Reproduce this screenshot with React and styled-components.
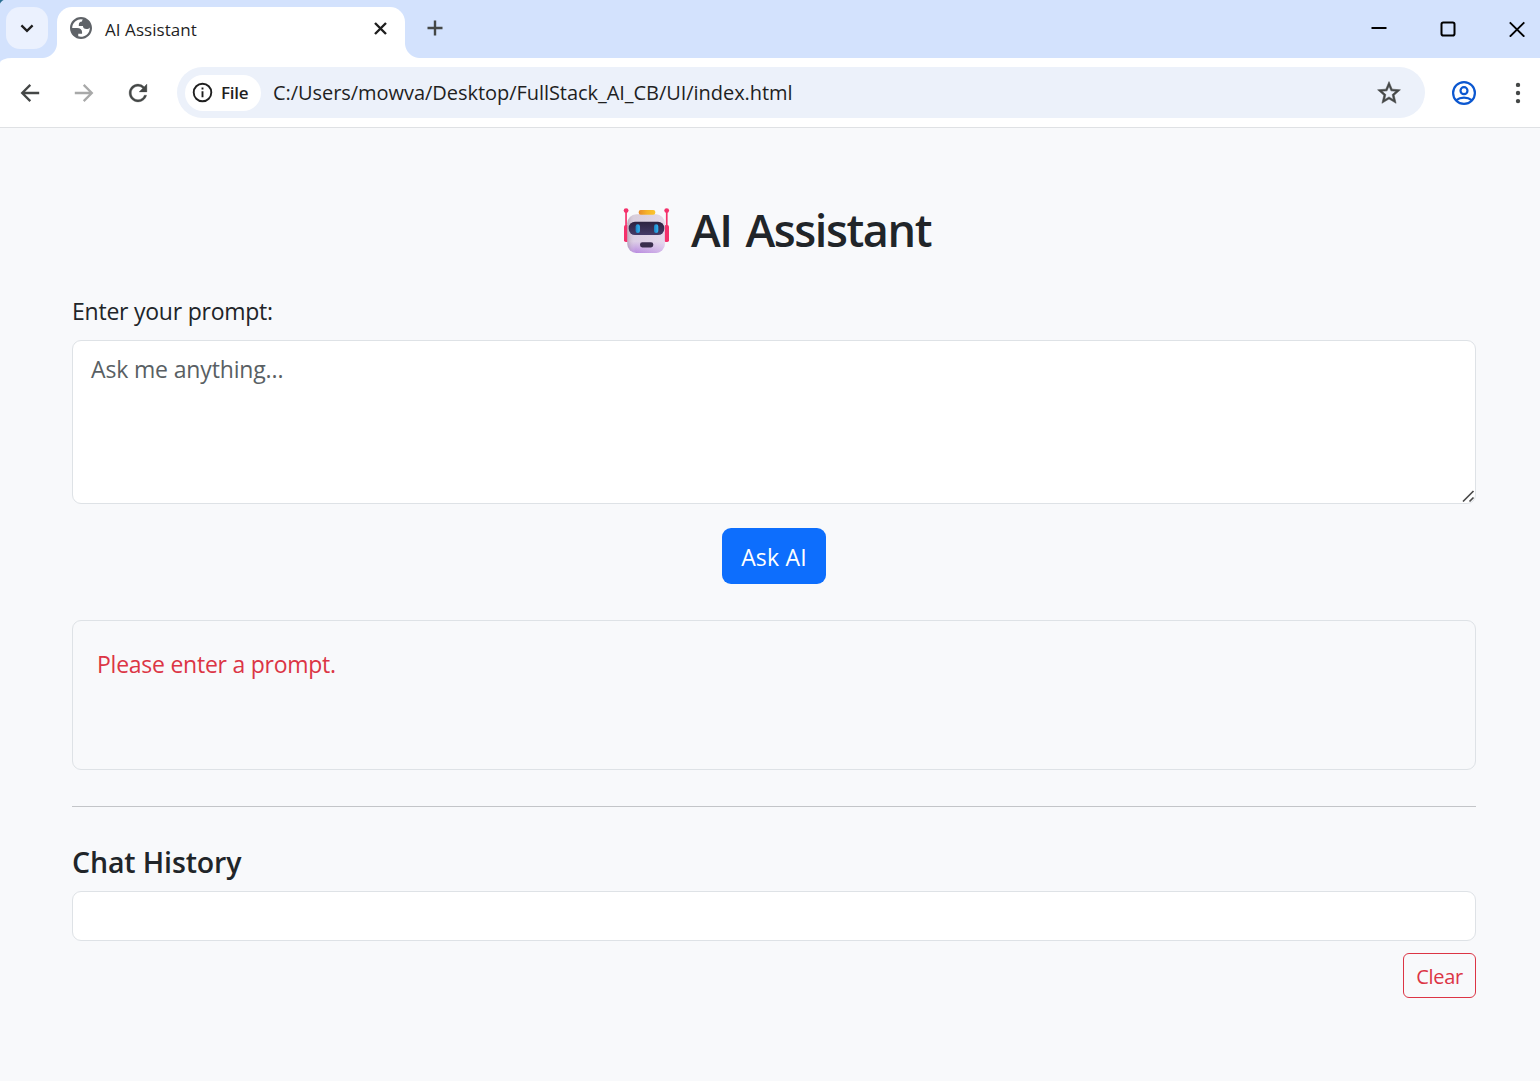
import React from "react";
import styled, { createGlobalStyle } from "styled-components";

const sans = `"Open Sans", "Noto Sans", sans-serif`;

const GlobalStyle = createGlobalStyle`
  *, *::before, *::after { box-sizing: border-box; }
  html, body { margin: 0; height: 100%; }
  body {
    overflow: hidden;
    background: #f8f9fb;
    color: #212529;
    font-family: ${sans};
  }
`;

const Window = styled.div`
  display: flex;
  flex-direction: column;
  width: 1540px;
  height: 1081px;
  overflow: hidden;
  background: #f8f9fb;
`;

const TabStrip = styled.header`
  display: flex;
  align-items: flex-start;
  flex: none;
  height: 58px;
  padding: 7px 15.5px 0 6px;
  background:
    radial-gradient(circle at 9px 9px, transparent 10px, #2b6f93 11px) 0 0 / 5px 5px no-repeat,
    #d3e2fd;
`;

const TabSearch = styled.button`
  display: flex;
  align-items: center;
  justify-content: center;
  width: 42px;
  height: 42px;
  padding: 0;
  border: 0;
  border-radius: 14px;
  background: #ebf1fe;
`;

const Tab = styled.div`
  position: relative;
  display: flex;
  align-items: center;
  width: 348px;
  height: 51px;
  margin-left: 9px;
  padding: 0 18px 9px 13px;
  border-radius: 15px 15px 0 0;
  background: #fff;

  &::before,
  &::after {
    content: "";
    position: absolute;
    bottom: 0;
    width: 15px;
    height: 15px;
  }
  &::before {
    right: 100%;
    background: radial-gradient(circle at 0 0, transparent 14.5px, #fff 15.5px);
  }
  &::after {
    left: 100%;
    background: radial-gradient(circle at 100% 0, transparent 14.5px, #fff 15.5px);
  }
`;

const TabTitle = styled.span`
  flex: 1;
  margin: 3px 0 0 13px;
  color: #1f1f1f;
  font-size: 17px;
  line-height: 24px;
  letter-spacing: 0.06px;
`;

const NewTab = styled.div`
  display: flex;
  margin: 13px 0 0 22px;
`;

const WindowControls = styled.div`
  display: flex;
  gap: 53px;
  margin: 14px 0 0 auto;
`;

const Toolbar = styled.div`
  flex: none;
  background: #d3e2fd;
`;

const ToolbarInner = styled.div`
  display: flex;
  align-items: center;
  height: 70px;
  padding: 0 9px 0 20px;
  border-bottom: 1px solid #dfe1e4;
  border-top-left-radius: 12px 5px;
  background: #fff;
`;

const NavButtons = styled.nav`
  display: flex;
  gap: 34px;
  width: 157px;
`;

const AddressBar = styled.div`
  display: flex;
  align-items: center;
  width: 1248px;
  height: 51px;
  padding: 0 24px 0 8px;
  border-radius: 26px;
  background: #ecf1fa;
`;

const FileChip = styled.div`
  display: flex;
  align-items: center;
  gap: 8px;
  width: 76px;
  height: 36px;
  padding-left: 7px;
  border-radius: 18px;
  background: #fff;
  color: #1f1f1f;
  font-size: 17px;
  font-weight: 600;
  letter-spacing: -0.25px;
`;

const Url = styled.span`
  flex: 1;
  margin-left: 12px;
  color: #1f1f1f;
  font-size: 20px;
  line-height: 30px;
  letter-spacing: -0.05px;
`;

const ToolbarActions = styled.div`
  display: flex;
  align-items: center;
  justify-content: space-between;
  flex: 1;
  padding-left: 27px;
`;

const Page = styled.main`
  display: flex;
  flex-direction: column;
  flex: 1;
  padding: 73px 64px 0 72px;
`;

const Title = styled.h1`
  display: flex;
  align-items: center;
  gap: 21px;
  align-self: center;
  height: 58px;
  margin: 0 0 34px;
  padding-left: 6px;
  font-size: 45px;
  font-weight: 600;
  line-height: 58px;
  letter-spacing: -1.4px;
  word-spacing: 3.5px;

  svg { margin-top: 1px; }
`;

const Label = styled.label`
  margin-bottom: 11px;
  font-size: 23px;
  line-height: 36px;
  letter-spacing: -0.235px;
`;

const PromptField = styled.div`
  position: relative;
  height: 164px;
  margin-bottom: 24px;
`;

const Prompt = styled.textarea`
  display: block;
  width: 100%;
  height: 100%;
  padding: 10px 18px;
  border: 1px solid #dee2e6;
  border-radius: 9px;
  outline: 0;
  resize: none;
  background: #fff;
  font: 23px/36px ${sans};
  letter-spacing: -0.15px;

  &::placeholder {
    color: #595f64;
    opacity: 1;
  }
`;

const Grip = styled.svg`
  position: absolute;
  right: 1.5px;
  bottom: 1px;
`;

const AskButton = styled.button`
  align-self: center;
  width: 104px;
  height: 56px;
  margin-bottom: 36px;
  padding: 2px 0 0;
  border: 0;
  border-radius: 9px;
  background: #0d6efd;
  color: #fff;
  font: 23px/36px ${sans};
  letter-spacing: 0.2px;
`;

const Response = styled.section`
  height: 150px;
  padding: 25px 24px;
  border: 1px solid #dee2e6;
  border-radius: 9px;
  color: #dc3545;
  font-size: 23px;
  line-height: 36px;
  letter-spacing: -0.25px;
`;

const Divider = styled.hr`
  width: 100%;
  height: 1px;
  margin: 36px 0 37px;
  border: 0;
  background: #c3c5c8;
`;

const HistoryTitle = styled.h2`
  margin: 0 0 11px;
  font-size: 28.5px;
  font-weight: 600;
  line-height: 36px;
  letter-spacing: -0.12px;
`;

const History = styled.div`
  height: 50px;
  margin-bottom: 12px;
  border: 1px solid #dee2e6;
  border-radius: 9px;
  background: #fff;
`;

const ClearButton = styled.button`
  align-self: flex-end;
  width: 73px;
  height: 45px;
  padding: 2px 0 0;
  border: 1px solid #dc3545;
  border-radius: 6px;
  background: transparent;
  color: #dc3545;
  font: 20px/30px ${sans};
  letter-spacing: -0.3px;
`;

const Chevron = () => (
  <svg width="14" height="14" viewBox="0 0 14 14" fill="none" stroke="#1f1f1f" strokeWidth="2.3">
    <path d="M1.4 4.4 7 9.8l5.600-5.400" />
  </svg>
);

const Globe = () => (
  <svg width="22" height="22" viewBox="2 2 20 20">
    <path
      fill="#5f6368"
      fillRule="evenodd"
      d="M12 2C6.480 2 2 6.480 2 12s4.480 10 10 10 10-4.480 10-10S17.520 2 12 2zM4 12h4.400c3.407.022 4.922 1.730 4.543 5.127H9.488v2.470a8.004 8.004 0 0 0 10.498-8.083C19.327 12.504 18.332 13 17 13c-2.137 0-3.206-.916-3.206-2.750h-3.748c-.274-2.728.683-4.092 2.870-4.092 0-.975.327-1.597.811-1.970A8.004 8.004 0 0 0 4 12z"
    />
  </svg>
);

const TabClose = () => (
  <svg width="13" height="13" viewBox="0 0 13 13" stroke="#1f1f1f" strokeWidth="2.4">
    <path d="m1 1 11 11M12 1 1 12" />
  </svg>
);

const Plus = () => (
  <svg width="16" height="16" viewBox="0 0 16 16" stroke="#444746" strokeWidth="2.4">
    <path d="M8 .5v15M.5 8h15" />
  </svg>
);

const Minimize = () => (
  <svg width="16" height="16" viewBox="0 0 16 16" stroke="#000" strokeWidth="2">
    <path d="M.5 7h15" />
  </svg>
);

const Maximize = () => (
  <svg width="16" height="16" viewBox="0 0 16 16" fill="none" stroke="#000" strokeWidth="2">
    <rect x="1.500" y="1.500" width="13" height="13" rx="1.800" />
  </svg>
);

const WindowClose = () => (
  <svg width="16" height="16" viewBox="0 0 16 16" stroke="#000" strokeWidth="1.900">
    <path d="m.8 1.300 14.500 14.400M15.300 1.300.8 15.700" />
  </svg>
);

const Arrow = ({ color, flip }) => (
  <svg width="20" height="20" viewBox="0 0 20 20" fill="none" stroke={color} strokeWidth="2.300">
    <path
      d="M19.200 10H2.500M10.300 1.900 2.200 10l8.100 8.100"
      transform={flip ? "matrix(-1 0 0 1 20 0)" : undefined}
    />
  </svg>
);

const Reload = () => (
  <svg width="20" height="20" viewBox="3 3 18 18">
    <path
      fill="#444746"
      stroke="#444746"
      strokeWidth="0.300"
      d="M17.650 6.350A7.958 7.958 0 0 0 12 4c-4.420 0-7.990 3.580-7.990 8s3.570 8 7.990 8c3.730 0 6.840-2.550 7.730-6h-2.080A5.990 5.990 0 0 1 12 18c-3.310 0-6-2.690-6-6s2.690-6 6-6c1.660 0 3.140.69 4.220 1.780L13 11h7V4l-2.350 2.350z"
    />
  </svg>
);

const Info = () => (
  <svg width="21" height="21" viewBox="0 0 21 21" fill="none" stroke="#1f1f1f" strokeWidth="1.900">
    <circle cx="10.500" cy="10.500" r="8.800" />
    <path d="M10.500 9.300v6M10.500 5.600v2" />
  </svg>
);

const Star = () => (
  <svg width="24" height="24" viewBox="1.500 1.500 21 21">
    <path
      fill="#444746"
      stroke="#444746"
      strokeWidth="0.450"
      d="m22 9.240-7.190-.62L12 2 9.190 8.630 2 9.240l5.460 4.730L5.820 21 12 17.270 18.180 21l-1.630-7.030L22 9.240zM12 15.400l-3.760 2.270 1-4.280-3.320-2.880 4.380-.38L12 6.100l1.710 4.040 4.380.38-3.320 2.880 1 4.280L12 15.400z"
    />
  </svg>
);

const Profile = () => (
  <svg width="24" height="24" viewBox="0 0 24 24" fill="none" stroke="#0b57d0" strokeWidth="2.200">
    <circle cx="12" cy="12" r="10.900" />
    <circle cx="12" cy="9.700" r="3.500" />
    <path d="M4.300 19.100c4.200-3.400 11.200-3.400 15.400 0" />
  </svg>
);

const Dots = () => (
  <svg width="26" height="24" viewBox="0 0 26 24" fill="#444746">
    <circle cx="13" cy="3.900" r="2.200" />
    <circle cx="13" cy="12" r="2.200" />
    <circle cx="13" cy="20.100" r="2.200" />
  </svg>
);

const Robot = () => (
  <svg width="47" height="47" viewBox="13 12 47 47">
    <defs>
      <linearGradient id="head" x1="0" y1="0" x2="0" y2="1">
        <stop offset="0" stopColor="#d9cfdc" />
        <stop offset="0.700" stopColor="#ddcfe6" />
        <stop offset="1" stopColor="#b98be0" />
      </linearGradient>
      <linearGradient id="shade" x1="0" y1="0" x2="1" y2="0">
        <stop offset="0" stopColor="#9a8797" stopOpacity="0.500" />
        <stop offset="0.220" stopColor="#e6dbea" stopOpacity="0" />
        <stop offset="1" stopColor="#efe4f5" stopOpacity="0.500" />
      </linearGradient>
      <linearGradient id="visor" x1="0" y1="0" x2="0" y2="1">
        <stop offset="0" stopColor="#2d2340" />
        <stop offset="1" stopColor="#453b68" />
      </linearGradient>
      <linearGradient id="hat" x1="0" y1="0" x2="1" y2="0">
        <stop offset="0" stopColor="#e88a2c" />
        <stop offset="0.500" stopColor="#f5b22a" />
        <stop offset="1" stopColor="#fbc52c" />
      </linearGradient>
      <linearGradient id="eye" x1="0" y1="0" x2="1" y2="0">
        <stop offset="0" stopColor="#1c83c4" />
        <stop offset="1" stopColor="#36b5f2" />
      </linearGradient>
    </defs>
    <g fill="#f4316b">
      <rect x="15.200" y="15.500" width="1.700" height="17" />
      <rect x="55.900" y="15.500" width="1.700" height="17" />
      <circle cx="16.100" cy="15.600" r="2.400" />
      <circle cx="56.700" cy="15.600" r="2.400" />
      <rect x="14" y="30" width="5" height="17" rx="1.800" />
      <rect x="54" y="30" width="5" height="17" rx="1.800" />
    </g>
    <rect x="17.300" y="19.300" width="37.500" height="38.700" rx="9" fill="url(#head)" />
    <rect x="17.300" y="19.300" width="37.500" height="38.700" rx="9" fill="url(#shade)" />
    <rect x="28.700" y="14.900" width="16.600" height="4.900" rx="2" fill="url(#hat)" />
    <rect x="18.700" y="26.700" width="35.600" height="13.400" rx="6.300" fill="url(#visor)" />
    <rect x="25.600" y="29.300" width="4.300" height="8.800" rx="2.100" fill="url(#eye)" />
    <rect x="44" y="29.300" width="4.300" height="8.800" rx="2.100" fill="url(#eye)" />
    <rect x="30" y="47.200" width="13.300" height="5.200" rx="2.300" fill="#3a2d4d" />
  </svg>
);

export default function App() {
  return (
    <>
      <GlobalStyle />
      <Window>
        <TabStrip>
          <TabSearch aria-label="Search tabs"><Chevron /></TabSearch>
          <Tab>
            <Globe />
            <TabTitle>AI Assistant</TabTitle>
            <TabClose />
          </Tab>
          <NewTab><Plus /></NewTab>
          <WindowControls>
            <Minimize />
            <Maximize />
            <WindowClose />
          </WindowControls>
        </TabStrip>
        <Toolbar>
          <ToolbarInner>
            <NavButtons>
              <Arrow color="#444746" />
              <Arrow color="#a8a9a9" flip />
              <Reload />
            </NavButtons>
            <AddressBar>
              <FileChip><Info />File</FileChip>
              <Url>C:/Users/mowva/Desktop/FullStack_AI_CB/UI/index.html</Url>
              <Star />
            </AddressBar>
            <ToolbarActions>
              <Profile />
              <Dots />
            </ToolbarActions>
          </ToolbarInner>
        </Toolbar>
        <Page>
          <Title><Robot />AI Assistant</Title>
          <Label htmlFor="prompt">Enter your prompt:</Label>
          <PromptField>
            <Prompt id="prompt" placeholder="Ask me anything..." />
            <Grip width="13" height="13" viewBox="0 0 13 13" stroke="#4a4a4a" strokeWidth="1.700">
              <path d="M1 11.500 11.500 1M7.500 11.500l4-4" />
            </Grip>
          </PromptField>
          <AskButton>Ask AI</AskButton>
          <Response>Please enter a prompt.</Response>
          <Divider />
          <HistoryTitle>Chat History</HistoryTitle>
          <History />
          <ClearButton>Clear</ClearButton>
        </Page>
      </Window>
    </>
  );
}
